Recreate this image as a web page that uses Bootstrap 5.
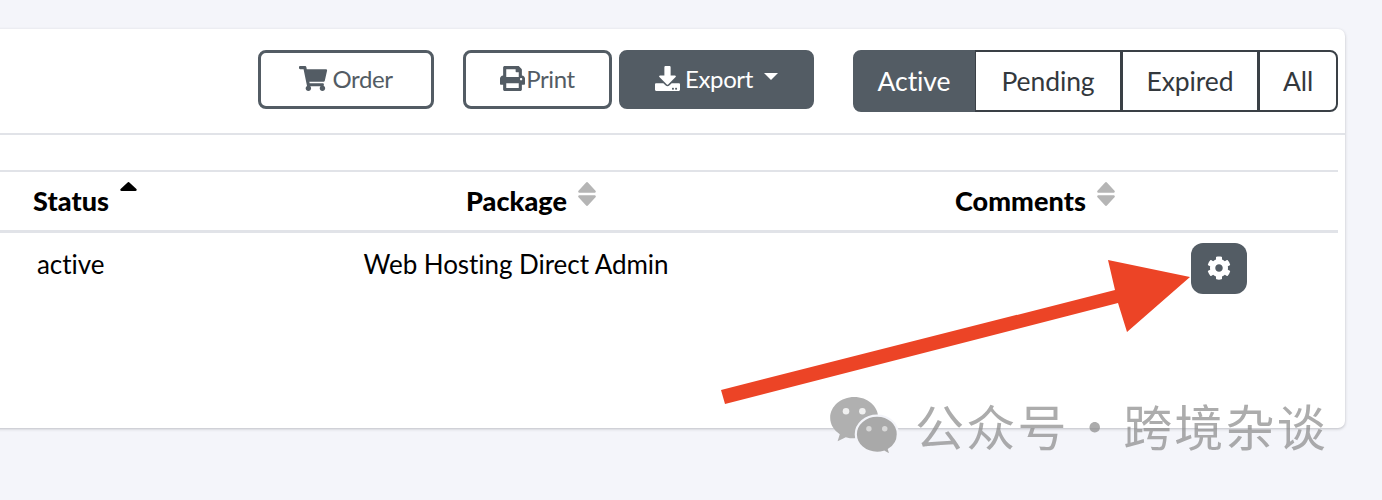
<!DOCTYPE html>
<html lang="en">

<head>
  <meta charset="UTF-8">
  <meta name="viewport" content="width=device-width, initial-scale=1">
  <title>Services</title>
  <link href="https://cdn.jsdelivr.net/npm/bootstrap@5.3.0/dist/css/bootstrap.min.css" rel="stylesheet">
  <style>
    html, body {
      height: 500px;
      overflow: hidden;
    }

    body {
      background-color: #f4f5fa;
      font-family: "Lato", "Liberation Sans", sans-serif;
      padding: 29px 37px 0 0;
      position: relative;
    }

    .service-card {
      height: 399px;
      margin-left: -20px;
      background: #fff;
      border: 0;
      border-radius: 7px;
      box-shadow: 0 1px 3px rgba(60, 60, 70, .3);
    }

    .service-head {
      height: 106px;
      padding: 21px 7px 0 0;
      border-bottom: 2px solid #e1e3e8;
    }

    .act-btn {
      height: 59px;
      border: 3px solid #535c64;
      border-radius: 8px;
      color: #535c64;
      background: #fff;
      font-size: 24px;
      line-height: 1;
      letter-spacing: -.4px;
      padding: 0 0 2px;
      display: flex;
      align-items: center;
      justify-content: center;
    }

    .act-btn svg {
      fill: #535c64;
      height: 25px;
      width: auto;
    }

    .btn-order { width: 176px; margin-right: 29px; gap: 5px; }
    .btn-print { width: 149px; margin-right: 7px; gap: 1px; }

    .btn-export {
      width: 195px;
      margin-right: 39px;
      gap: 5px;
      background: #535c64;
      color: #fff;
    }

    .btn-export svg { fill: #fff; }

    .btn-export.dropdown-toggle::after {
      margin-left: 6px;
      border-top-width: 7px;
      border-right-width: 7px;
      border-left-width: 7px;
      transform: translateY(-2px);
    }

    .state-group {
      height: 62px;
    }

    .state-group .btn {
      font-size: 26.5px;
      letter-spacing: -.1px;
      color: #33383d;
      background: #fff;
      border: 2px solid #3a4046;
      border-radius: 8px;
      padding: 2px 0 0;
      display: flex;
      align-items: center;
      justify-content: center;
    }

    .state-group .btn.active {
      background: #535c64;
      border-color: #535c64;
      color: #fff;
    }

    .st-active { width: 122px; }
    .st-pending { width: 148px; }
    .st-expired { width: 138px; }
    .st-all { width: 80px; }

    .svc-table {
      width: calc(100% - 7px);
      margin-top: 35px;
      table-layout: fixed;
      border-collapse: collapse;
      color: #000;
    }

    .svc-table thead th {
      height: 60px;
      border-top: 2px solid #e1e3e8;
      border-bottom: 3px solid #e1e3e8;
      font-size: 27px;
      font-weight: 900;
      letter-spacing: .1px;
      padding: 0;
      vertical-align: middle;
    }

    .svc-table tbody td {
      font-size: 26px;
      letter-spacing: -.05px;
      padding: 10px 0 0;
      vertical-align: top;
    }

    .col-status { width: 320px; }
    .col-package { width: 432px; }

    .th-status { padding-left: 53px !important; }
    .th-package { padding-left: 30px !important; }
    .td-status { padding: 12px 0 0 57px !important; }
    .td-package { padding-top: 12px !important; }
    .td-tools { padding-right: 91px !important; }

    .sort-mark {
      position: relative;
      top: -10px;
      margin-left: 11px;
    }

    .sort-mark-on {
      top: -17px;
    }

    .gear-btn {
      width: 56px;
      height: 51px;
      padding: 0;
      border: 0;
      border-radius: 12px;
      background: #535c64;
      display: inline-flex;
      align-items: center;
      justify-content: center;
    }

    .gear-btn svg {
      width: 24px;
      height: 24px;
      fill: #fff;
    }

    /* annotation laid over the screenshot */
    .red-arrow {
      position: absolute;
      left: 0;
      top: 0;
      pointer-events: none;
    }

    .wm-mark {
      position: absolute;
      left: 829px;
      top: 396px;
      display: flex;
      align-items: center;
      color: rgba(140, 140, 140, .72);
      font-family: "Noto Sans CJK SC", sans-serif;
      font-size: 49px;
      line-height: 60px;
      letter-spacing: 2.2px;
      word-spacing: -11.5px;
    }

    .wm-mark svg {
      margin-right: 16px;
    }

    .wm-mark span {
      margin-top: -3px;
    }
  </style>
</head>

<body>

  <div class="card service-card">
    <div class="service-head d-flex justify-content-end align-items-start">
      <button class="btn act-btn btn-order" type="button">
        <svg viewBox="0 0 576 512"><path d="M528.12 301.319l47.273-208C578.806 78.301 567.391 64 551.99 64H159.208l-9.166-44.81C147.758 8.021 137.93 0 126.529 0H24C10.745 0 0 10.745 0 24v16c0 13.255 10.745 24 24 24h69.883l70.248 343.435C147.325 417.1 136 435.222 136 456c0 30.928 25.072 56 56 56s56-25.072 56-56c0-15.674-6.447-29.835-16.824-40h209.647C430.447 426.165 424 440.326 424 456c0 30.928 25.072 56 56 56s56-25.072 56-56c0-22.172-12.888-41.332-31.579-50.405l5.517-24.276c3.413-15.018-8.002-29.319-23.403-29.319H218.117l-6.545-32h293.145c11.206 0 20.92-7.754 23.403-18.681z"/></svg>
        Order
      </button>
      <button class="btn act-btn btn-print" type="button">
        <svg viewBox="0 0 512 512"><path d="M448 192V77.25c0-8.49-3.37-16.62-9.37-22.63L393.37 9.37c-6-6-14.14-9.37-22.63-9.37H96C78.33 0 64 14.33 64 32v160c-35.35 0-64 28.65-64 64v112c0 8.84 7.16 16 16 16h48v96c0 17.67 14.33 32 32 32h320c17.67 0 32-14.33 32-32v-96h48c8.84 0 16-7.16 16-16V256c0-35.35-28.65-64-64-64zm-64 256H128v-96h256v96zm0-224H128V64h192v48c0 8.84 7.16 16 16 16h48v96zm48 72c-13.25 0-24-10.75-24-24 0-13.26 10.75-24 24-24s24 10.74 24 24c0 13.25-10.75 24-24 24z"/></svg>
        Print
      </button>
      <button class="btn act-btn btn-export dropdown-toggle" type="button" data-bs-toggle="dropdown">
        <svg viewBox="0 0 512 512"><path d="M216 0h80c13.3 0 24 10.7 24 24v168h87.7c17.8 0 26.7 21.5 14.1 34.1L269.7 378.3c-7.5 7.5-19.8 7.5-27.3 0L90.1 226.1c-12.6-12.6-3.7-34.1 14.1-34.1H192V24c0-13.3 10.7-24 24-24zm296 376v112c0 13.3-10.7 24-24 24H24c-13.3 0-24-10.7-24-24V376c0-13.3 10.7-24 24-24h146.7l49 49c20.1 20.1 52.5 20.1 72.6 0l49-49H488c13.3 0 24 10.7 24 24zm-124 88c0-11-9-20-20-20s-20 9-20 20 9 20 20 20 20-9 20-20zm64 0c0-11-9-20-20-20s-20 9-20 20 9 20 20 20 20-9 20-20z"/></svg>
        Export
      </button>
      <div class="btn-group state-group" role="group">
        <button class="btn st-active active" type="button">Active</button>
        <button class="btn st-pending" type="button">Pending</button>
        <button class="btn st-expired" type="button">Expired</button>
        <button class="btn st-all" type="button">All</button>
      </div>
    </div>

    <table class="svc-table">
      <colgroup>
        <col class="col-status">
        <col class="col-package">
        <col>
      </colgroup>
      <thead>
        <tr>
          <th class="th-status">Status<svg class="sort-mark sort-mark-on" width="17" height="9" viewBox="0 0 17 9"><path d="M7.6.5a1.2 1.2 0 0 1 1.8 0l7 6.4c.7.7.3 2-.8 2H1.400c-1.100 0-1.500-1.300-.8-2z" fill="#000"/></svg></th>
          <th class="th-package text-center">Package<svg class="sort-mark" width="18" height="24" viewBox="0 0 18 24"><path d="M8.100.5a1.200 1.200 0 0 1 1.800 0l7.600 8.200c.7.800.2 2.100-.9 2.100H1.400C.3 10.800-.2 9.500.5 8.700zM8.100 23.500a1.200 1.200 0 0 0 1.800 0l7.600-8.200c.7-.8.2-2.100-.9-2.100H1.400C.3 13.200-.2 14.500.5 15.300z" fill="#b5b5b5"/></svg></th>
          <th class="text-center">Comments<svg class="sort-mark" width="18" height="24" viewBox="0 0 18 24"><path d="M8.100.5a1.200 1.200 0 0 1 1.800 0l7.600 8.200c.7.800.2 2.100-.9 2.100H1.400C.3 10.800-.2 9.500.5 8.700zM8.100 23.500a1.200 1.200 0 0 0 1.800 0l7.600-8.200c.7-.8.2-2.100-.9-2.100H1.400C.3 13.200-.2 14.500.5 15.300z" fill="#b5b5b5"/></svg></th>
        </tr>
      </thead>
      <tbody>
        <tr>
          <td class="td-status">active</td>
          <td class="td-package text-center">Web Hosting Direct Admin</td>
          <td class="td-tools text-end">
            <button class="gear-btn" type="button" aria-label="Manage">
              <svg viewBox="0 0 512 512"><path d="M487.4 315.700l-42.600-24.600c4.300-23.200 4.300-47 0-70.200l42.600-24.600c4.900-2.800 7.100-8.600 5.500-14-11.100-35.600-30-67.800-54.700-94.600-3.800-4.100-10-5.100-14.800-2.300L380.800 110c-17.900-15.400-38.500-27.300-60.800-35.100V25.800c0-5.600-3.900-10.500-9.400-11.700-36.700-8.200-74.300-7.800-109.200 0-5.500 1.200-9.400 6.100-9.400 11.700V75c-22.200 7.900-42.800 19.800-60.800 35.100L88.700 85.500c-4.900-2.800-11-1.900-14.800 2.300-24.700 26.700-43.600 58.900-54.700 94.600-1.700 5.400.6 11.200 5.500 14L67.300 221c-4.300 23.200-4.300 47 0 70.200l-42.600 24.600c-4.900 2.800-7.100 8.600-5.500 14 11.100 35.600 30 67.800 54.700 94.600 3.800 4.100 10 5.100 14.800 2.300l42.600-24.600c17.900 15.400 38.500 27.300 60.800 35.100v49.200c0 5.600 3.900 10.500 9.400 11.700 36.700 8.200 74.300 7.800 109.200 0 5.500-1.200 9.400-6.100 9.400-11.700v-49.200c22.200-7.900 42.800-19.800 60.800-35.100l42.600 24.600c4.900 2.800 11 1.900 14.800-2.300 24.700-26.700 43.600-58.900 54.700-94.600 1.500-5.500-.7-11.300-5.600-14.100zM256 336c-44.100 0-80-35.900-80-80s35.900-80 80-80 80 35.900 80 80-35.900 80-80 80z"/></svg>
            </button>
          </td>
        </tr>
      </tbody>
    </table>
  </div>

  <svg class="red-arrow" width="1382" height="500" viewBox="0 0 1382 500">
    <polygon points="721,390 725,404 1118,303 1127,332 1190,277 1108,260 1115,290" fill="#ec4426"/>
  </svg>

  <div class="wm-mark">
    <svg width="70" height="60" viewBox="0 0 64 55">
      <path d="M23 1C10.800 1 1 9.500 1 20c0 6.200 3.400 11.500 8.800 15l-2 6.500 7.500-3.800c2.500.7 5 1.100 7.700 1.100 12.200 0 22-8.500 22-19S35.200 1 23 1z" fill="#b0b0b0"/>
      <path d="M44 18c-10.800 0-19.500 7.600-19.500 17S33.200 52 44 52c2.300 0 4.400-.3 6.400-.9l6.100 3.400-1.600-5.500c4.900-3.100 8.100-7.700 8.100-14C63 25.600 54.800 18 44 18z" fill="#a9a9a9" stroke="#f4f5fa" stroke-width="2"/>
      <circle cx="15.500" cy="14" r="3" fill="#f0f0f0"/><circle cx="30.500" cy="14" r="3" fill="#f0f0f0"/>
      <circle cx="36.500" cy="30" r="2.500" fill="#d8d8d8"/><circle cx="51" cy="30" r="2.500" fill="#d8d8d8"/>
    </svg>
    <span>公众号 · 跨境杂谈</span>
  </div>

  <script src="https://cdn.jsdelivr.net/npm/bootstrap@5.3.0/dist/js/bootstrap.bundle.min.js"></script>
</body>

</html>
